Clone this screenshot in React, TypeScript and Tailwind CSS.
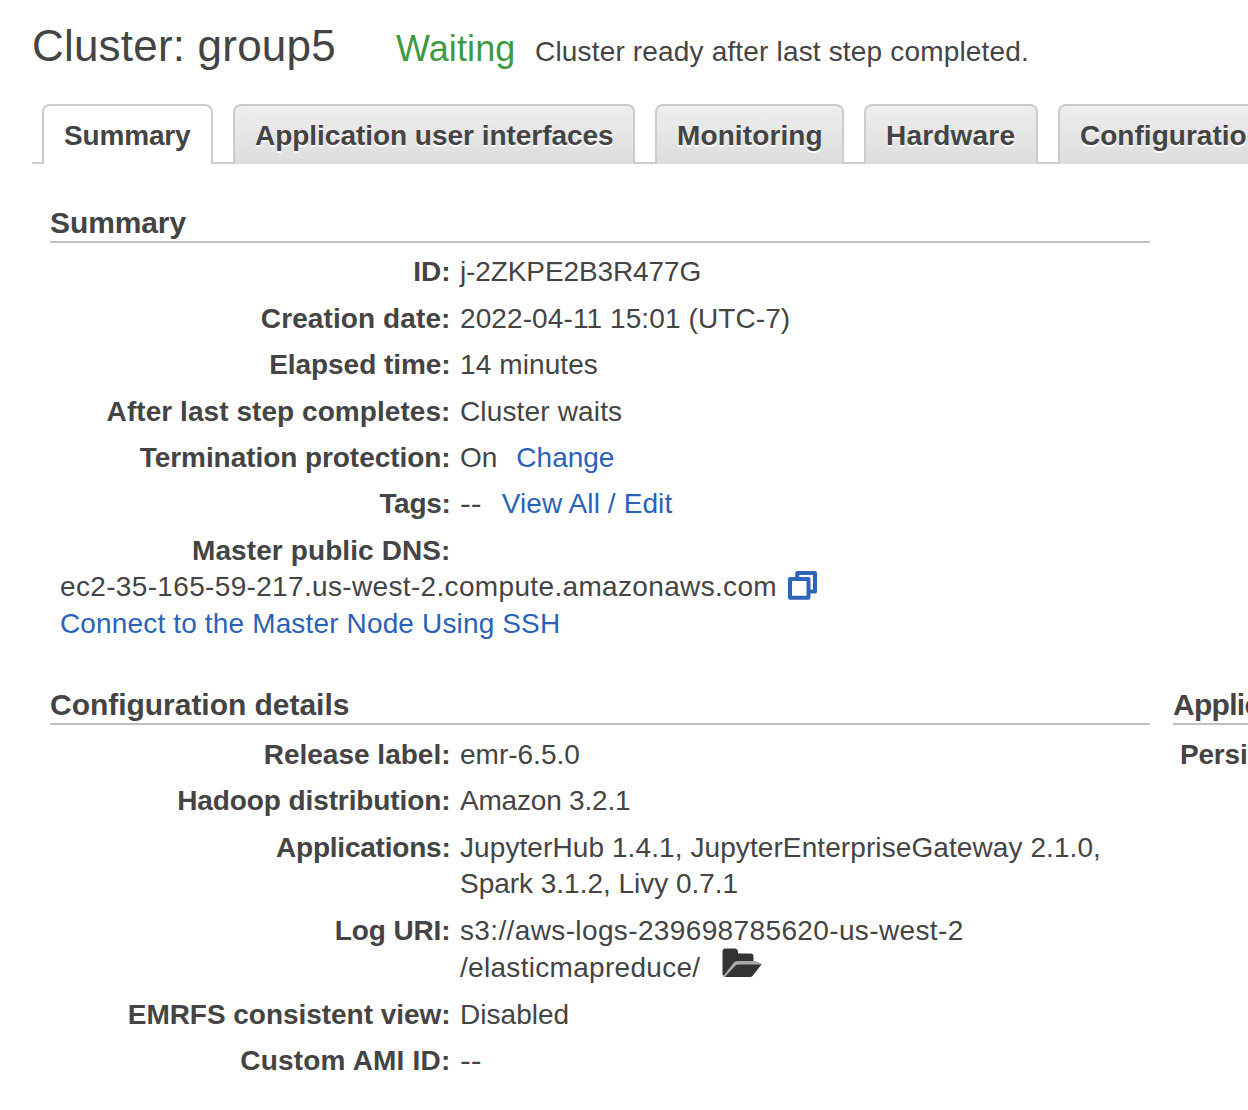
import type { ReactNode } from "react";

const tabs = [
  { label: "Summary", width: "w-[171px]", track: "tracking-[-0.17px]" },
  { label: "Application user interfaces", width: "w-[402px]", track: "tracking-[-0.03px]" },
  { label: "Monitoring", width: "w-[189px]", track: "tracking-[0.11px]" },
  { label: "Hardware", width: "w-[174px]", track: "tracking-[0.2px]" },
  { label: "Configurations", width: "w-[236px]", track: "tracking-[0.02px]" },
];

function Tabs() {
  return (
    <nav className="flex h-[60px] items-end pl-8">
      {tabs.map((tab, i) => (
        <div key={tab.label} className="flex shrink-0 items-end">
          <div className={`h-0.5 bg-[#ccc] ${i === 0 ? "w-[10px]" : "w-5"}`} />
          <button
            className={`h-[60px] rounded-t-lg border-2 border-b-0 border-[#ccc] pl-5 text-left text-[28px] leading-[59px] font-bold whitespace-nowrap ${tab.width} ${tab.track} ${
              i === 0 ? "bg-white" : "bg-linear-to-b from-[#eee] to-[#ddd] [text-shadow:0_2px_0_#fff]"
            }`}
          >
            {tab.label}
          </button>
        </div>
      ))}
    </nav>
  );
}

function Heading({ children, track }: { children: ReactNode; track: string }) {
  return (
    <h2 className={`h-10 border-b-2 border-[#bfbfbf] text-[30px] leading-10 font-bold whitespace-nowrap ${track}`}>
      {children}
    </h2>
  );
}

function Row({ label, track = "", children }: { label: string; track?: string; children?: ReactNode }) {
  return (
    <div className="flex pt-[10px]">
      <dt className={`w-[400.5px] shrink-0 text-right font-bold whitespace-nowrap ${track}`}>{label}</dt>
      <dd className="pl-[9.5px] whitespace-nowrap">{children}</dd>
    </div>
  );
}

function Link({ children, className = "" }: { children: ReactNode; className?: string }) {
  return (
    <a href="#" className={`text-[#2a62b8] ${className}`}>
      {children}
    </a>
  );
}

function Dashes() {
  return <span className="inline-block origin-left scale-x-[1.16]">--</span>;
}

function CopyIcon() {
  return (
    <svg className="mt-[1.7px]" width="30" height="30" viewBox="0 0 30 30" fill="none" stroke="#2e65b9" strokeWidth="4" strokeLinejoin="round">
      <path d="M9.2 7V2H27V20.5H20" />
      <rect x="2" y="8" width="18.5" height="18.7" fill="#fff" />
    </svg>
  );
}

function FolderIcon() {
  return (
    <svg className="mt-[-1.5px] ml-[-0.5px]" width="40" height="30" viewBox="0 0 40 30">
      <path fill="#333" d="M0.5 27V3.5Q0.5 0.5 3.5 0.5H12.5Q15.5 0.5 16 3.5V5.5H28.5Q31.5 5.5 31.5 8.5V14H14L2.5 28Z" />
      <path fill="#aaa" d="M1 28.5L11.5 15Q13 13 15.5 13H33.5L39.5 15.5V17H16L4 29H1.5Z" />
      <path fill="#333" d="M3 29L12.5 18.5Q14 16.5 16.5 16.5H39.5L30.5 28Q29.5 29 27.5 29Z" />
    </svg>
  );
}

export default function App() {
  return (
    <div className="h-[1110px] w-full overflow-hidden bg-white font-['Liberation_Sans',Arial,sans-serif] text-[28px] leading-[36.5px] text-[#444]">
      <header className="flex h-[104px] items-baseline pt-[22px] pl-8 whitespace-nowrap">
        <h1 className="w-[364px] text-[44px] leading-[48px] tracking-[0.2px]">Cluster: group5</h1>
        <span className="w-[139px] text-[36px] leading-[48px] tracking-[0.1px] text-[#3f9a3f]">Waiting</span>
        <span className="tracking-[0.17px]">Cluster ready after last step completed.</span>
      </header>

      <Tabs />

      <main className="pt-[39px] pl-[50px]">
        <section className="w-[1100px]">
          <Heading track="tracking-[-0.1px]">Summary</Heading>
          <dl className="pt-[1.35px] leading-[36.4px]">
            <Row label="ID:">
              <span className="tracking-[-0.11px]">j-2ZKPE2B3R477G</span>
            </Row>
            <Row label="Creation date:" track="tracking-[0.1px]">
              <span className="tracking-[0.1px]">2022-04-11 15:01 (UTC-7)</span>
            </Row>
            <Row label="Elapsed time:" track="tracking-[-0.06px]">
              <span className="tracking-[0.1px]">14 minutes</span>
            </Row>
            <Row label="After last step completes:" track="tracking-[0.06px]">
              <span className="tracking-[0.15px]">Cluster waits</span>
            </Row>
            <Row label="Termination protection:" track="tracking-[-0.06px]">
              On<Link className="ml-[19px]">Change</Link>
            </Row>
            <Row label="Tags:" track="tracking-[-0.3px]">
              <Dashes />
              <Link className="ml-[23px] tracking-[0.1px]">View All / Edit</Link>
            </Row>
            <Row label="Master public DNS:" track="tracking-[0.1px]" />
            <div className="pl-[10px] whitespace-nowrap">
              <div className="flex">
                <span className="w-[728px] tracking-[0.34px]">ec2-35-165-59-217.us-west-2.compute.amazonaws.com</span>
                <CopyIcon />
              </div>
              <Link className="tracking-[0.15px]">Connect to the Master Node Using SSH</Link>
            </div>
          </dl>
        </section>

        <div className="mt-[43px] flex gap-[23px]">
          <section className="w-[1100px] shrink-0">
            <Heading track="tracking-[-0.03px]">Configuration details</Heading>
            <dl className="pt-[1.8px]">
              <Row label="Release label:">emr-6.5.0</Row>
              <Row label="Hadoop distribution:" track="tracking-[-0.1px]">
                <span className="tracking-[-0.2px]">Amazon 3.2.1</span>
              </Row>
              <Row label="Applications:" track="tracking-[-0.22px]">
                <span className="tracking-[0.09px]">JupyterHub 1.4.1, JupyterEnterpriseGateway 2.1.0,</span>
                <br />
                <span className="tracking-[-0.02px]">Spark 3.1.2, Livy 0.7.1</span>
              </Row>
              <Row label="Log URI:" track="tracking-[-0.12px]">
                <span className="tracking-[0.37px]">s3://aws-logs-239698785620-us-west-2</span>
                <div className="flex h-[37.4px] leading-[37.8px]">
                  <span className="w-[262px] tracking-[0.3px]">/elasticmapreduce/</span>
                  <FolderIcon />
                </div>
              </Row>
              <Row label="EMRFS consistent view:" track="tracking-[-0.04px]">
                <span className="tracking-[0.03px]">Disabled</span>
              </Row>
              <Row label="Custom AMI ID:" track="tracking-[0.2px]">
                <Dashes />
              </Row>
            </dl>
          </section>
          <section className="w-[1100px] shrink-0">
            <Heading track="tracking-[-0.7px]">Applications</Heading>
            <div className="pt-[11.8px] pl-[7px] font-bold tracking-[-0.2px] whitespace-nowrap">Persistent user interfaces:</div>
          </section>
        </div>
      </main>
    </div>
  );
}
